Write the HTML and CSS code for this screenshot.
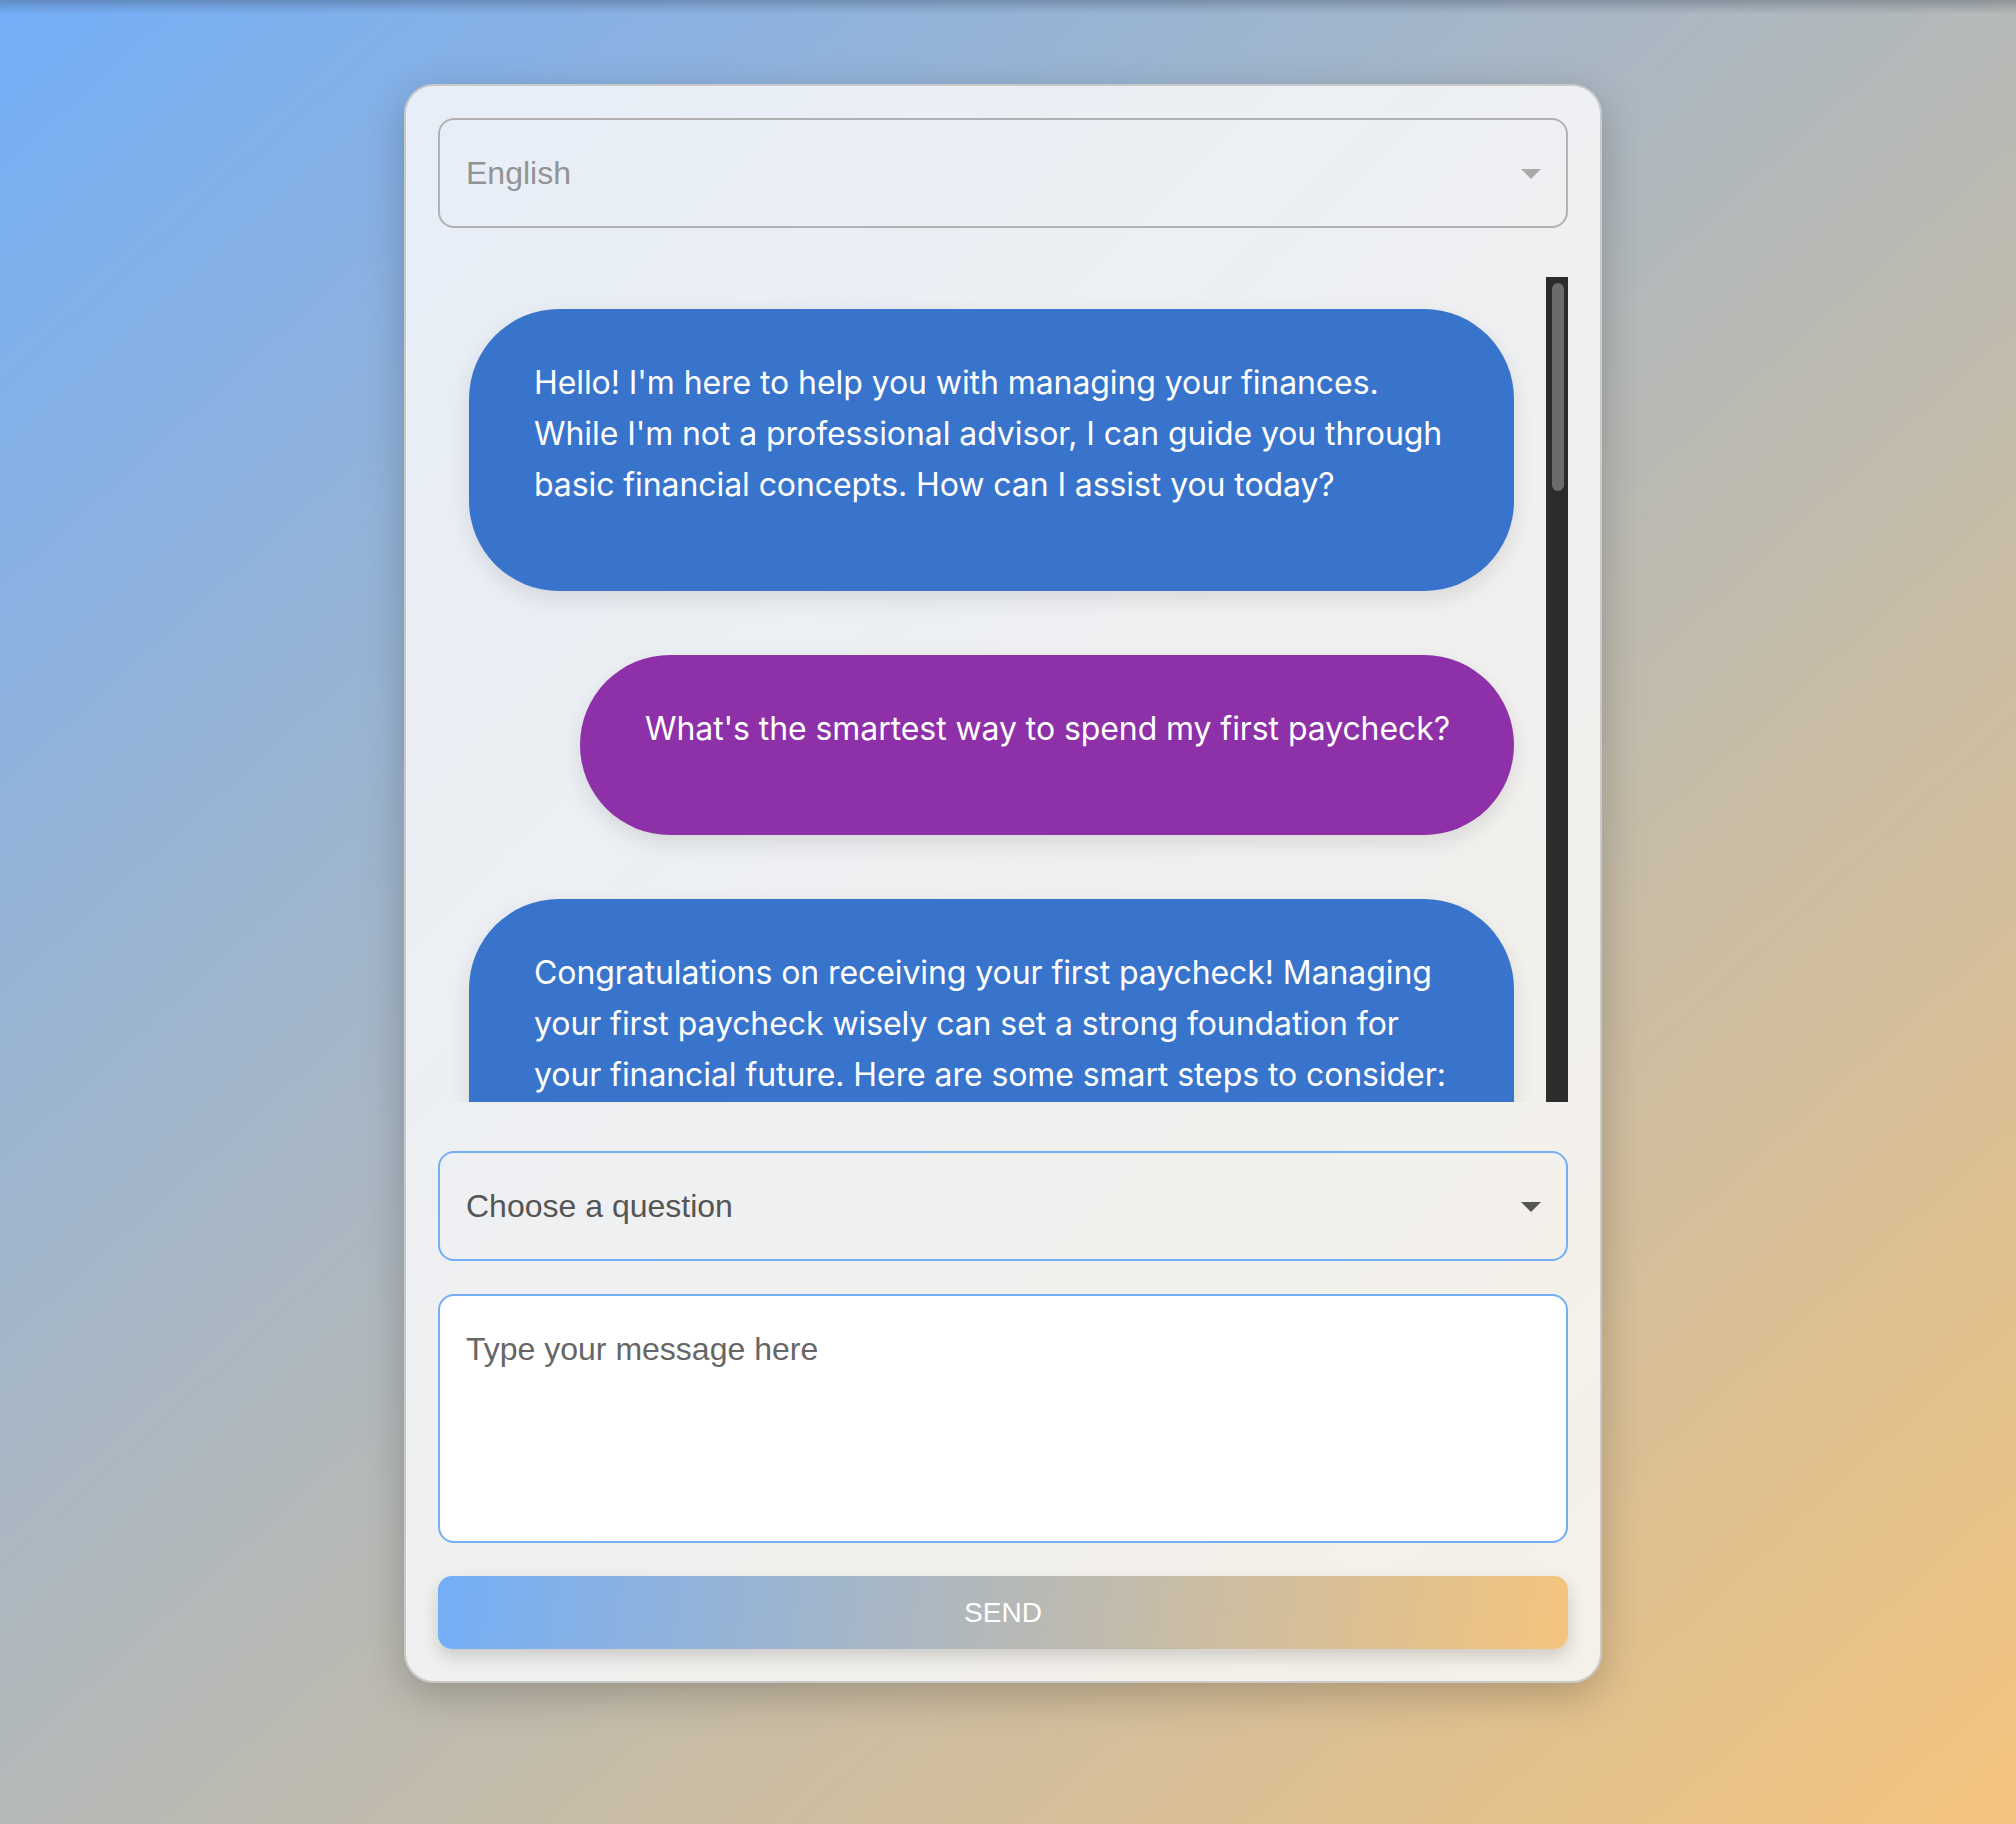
FILE: index.html
```html
<!DOCTYPE html>
<html lang="en">
<head>
<meta charset="utf-8">
<title>Finance Chat</title>
<link rel="stylesheet" href="styles.css">
</head>
<body>
<main class="card">
  <div class="select-wrap lang">
    <select class="select lang-select">
      <option>English</option>
      <option>Español</option>
    </select>
  </div>

  <div class="chat-frame">
    <div class="chat">
      <div class="bubble bot">Hello! I'm here to help you with managing your finances. While I'm not a professional advisor, I can guide you through basic financial concepts. How can I assist you today?</div>
      <div class="bubble user">What's the smartest way to spend my first paycheck?</div>
      <div class="bubble bot">Congratulations on receiving your first paycheck! Managing your first paycheck wisely can set a strong foundation for your financial future. Here are some smart steps to consider:

1. Create a Budget: Start by listing your monthly income and expenses. Use the 50/30/20 rule as a guide: 50% for needs, 30% for wants, and 20% for savings and debt repayment.

2. Build an Emergency Fund: Aim to save at least three to six months' worth of living expenses. Start small and contribute a portion of each paycheck.

3. Pay Off High-Interest Debt: If you have credit card debt or other high-interest loans, prioritize paying them off to save money on interest.

4. Start Saving for Retirement: If your employer offers a retirement plan with matching contributions, contribute enough to get the full match. It's free money!

5. Set Financial Goals: Think about short-term and long-term goals, such as buying a car, traveling, or saving for a home, and plan how to reach them.

6. Treat Yourself (Responsibly): It's okay to celebrate! Set aside a small amount for something you enjoy, but keep it within your budget.

Remember, building good financial habits early will make a big difference over time.</div>
    </div>
    <div class="scroll-track" aria-hidden="true">
      <div class="scroll-thumb"></div>
    </div>
  </div>

  <div class="select-wrap question">
    <select class="select question-select">
      <option>Choose a question</option>
      <option>How do I start a budget?</option>
      <option>How much should I save each month?</option>
    </select>
  </div>

  <textarea class="message" placeholder="Type your message here"></textarea>

  <button class="send" type="button">SEND</button>
</main>
</body>
</html>
```

FILE: styles.css
```css
html {
  margin: 0;
}

body {
  margin: 0;
  min-height: 100vh;
  background:
    linear-gradient(to bottom, rgba(40, 50, 70, 0.28), rgba(40, 50, 70, 0) 14px),
    linear-gradient(to bottom right, #74aef7 0%, #b5b9b8 50%, #f4c47d 100%);
  font-family: "Liberation Sans", Arial, sans-serif;
  display: flex;
  justify-content: center;
  align-items: flex-start;
  padding: 84px 10px 0 0;
  box-sizing: border-box;
}

.card {
  width: 1198px;
  box-sizing: border-box;
  padding: 32px;
  border: 2px solid #c9c9c9;
  border-radius: 30px;
  background: linear-gradient(135deg, #e7eef8 0%, #eff0f1 50%, #f6f1e8 100%);
  box-shadow: 0 12px 40px rgba(0, 0, 0, 0.22);
  display: flex;
  flex-direction: column;
}

.select-wrap {
  position: relative;
}

.select-wrap::after {
  content: "";
  position: absolute;
  right: 27px;
  top: 51px;
  width: 0;
  height: 0;
  border-left: 10px solid transparent;
  border-right: 10px solid transparent;
  border-top: 10px solid #aaaaaa;
  pointer-events: none;
}

.select-wrap.question::after {
  border-top-color: #555555;
}

.select {
  appearance: none;
  -webkit-appearance: none;
  width: 100%;
  height: 110px;
  box-sizing: border-box;
  padding: 0 60px 0 26px;
  border-radius: 16px;
  background: transparent;
  font-family: "Liberation Sans", Arial, sans-serif;
  font-size: 32px;
  outline: none;
}

.lang-select {
  border: 2px solid #b2b2b4;
  color: #939393;
}

.question-select {
  border: 2px solid #74aef5;
  color: #555555;
}

.select-wrap.question {
  margin-top: 49px;
}

.chat-frame {
  margin-top: 49px;
  height: 825px;
  display: flex;
}

.chat {
  flex: 1;
  min-width: 0;
  overflow: hidden;
  box-sizing: border-box;
  padding: 32px 32px 32px 31px;
  display: flex;
  flex-direction: column;
  gap: 64px;
}

.scroll-track {
  flex: none;
  width: 22px;
  background: #2c2c2c;
  box-sizing: border-box;
  padding: 6px 4px 0 6px;
}

.scroll-thumb {
  height: 208px;
  border-radius: 6px;
  background: #6b6b6b;
}

.bubble {
  flex: none;
  max-width: 100%;
  box-sizing: border-box;
  padding: 48px 64px 81px 65px;
  border-radius: 90px;
  font-family: Inter, "Noto Sans", sans-serif;
  font-size: 32px;
  line-height: 51px;
  letter-spacing: -0.08px;
  color: #ffffff;
  white-space: pre-line;
  box-shadow: 0 8px 22px rgba(0, 0, 0, 0.1);
}

.bubble.bot {
  align-self: stretch;
  background: #3874cb;
}

.bubble.user {
  align-self: flex-end;
  background: #8e30a8;
}

.message {
  margin-top: 33px;
  height: 249px;
  box-sizing: border-box;
  padding: 35px 26px;
  border: 2px solid #74aef5;
  border-radius: 16px;
  background: #ffffff;
  resize: none;
  font-family: "Liberation Sans", Arial, sans-serif;
  font-size: 32px;
  color: #333333;
  outline: none;
}

.message::placeholder {
  color: #666666;
}

.send {
  margin-top: 33px;
  height: 73px;
  border: none;
  border-radius: 14px;
  background: linear-gradient(100deg, #74aef7 0%, #b5b9b8 50%, #f4c47d 100%);
  color: #ffffff;
  font-family: "Liberation Sans", Arial, sans-serif;
  font-size: 28px;
  box-shadow: 0 8px 18px rgba(0, 0, 0, 0.16);
  cursor: pointer;
}
```
